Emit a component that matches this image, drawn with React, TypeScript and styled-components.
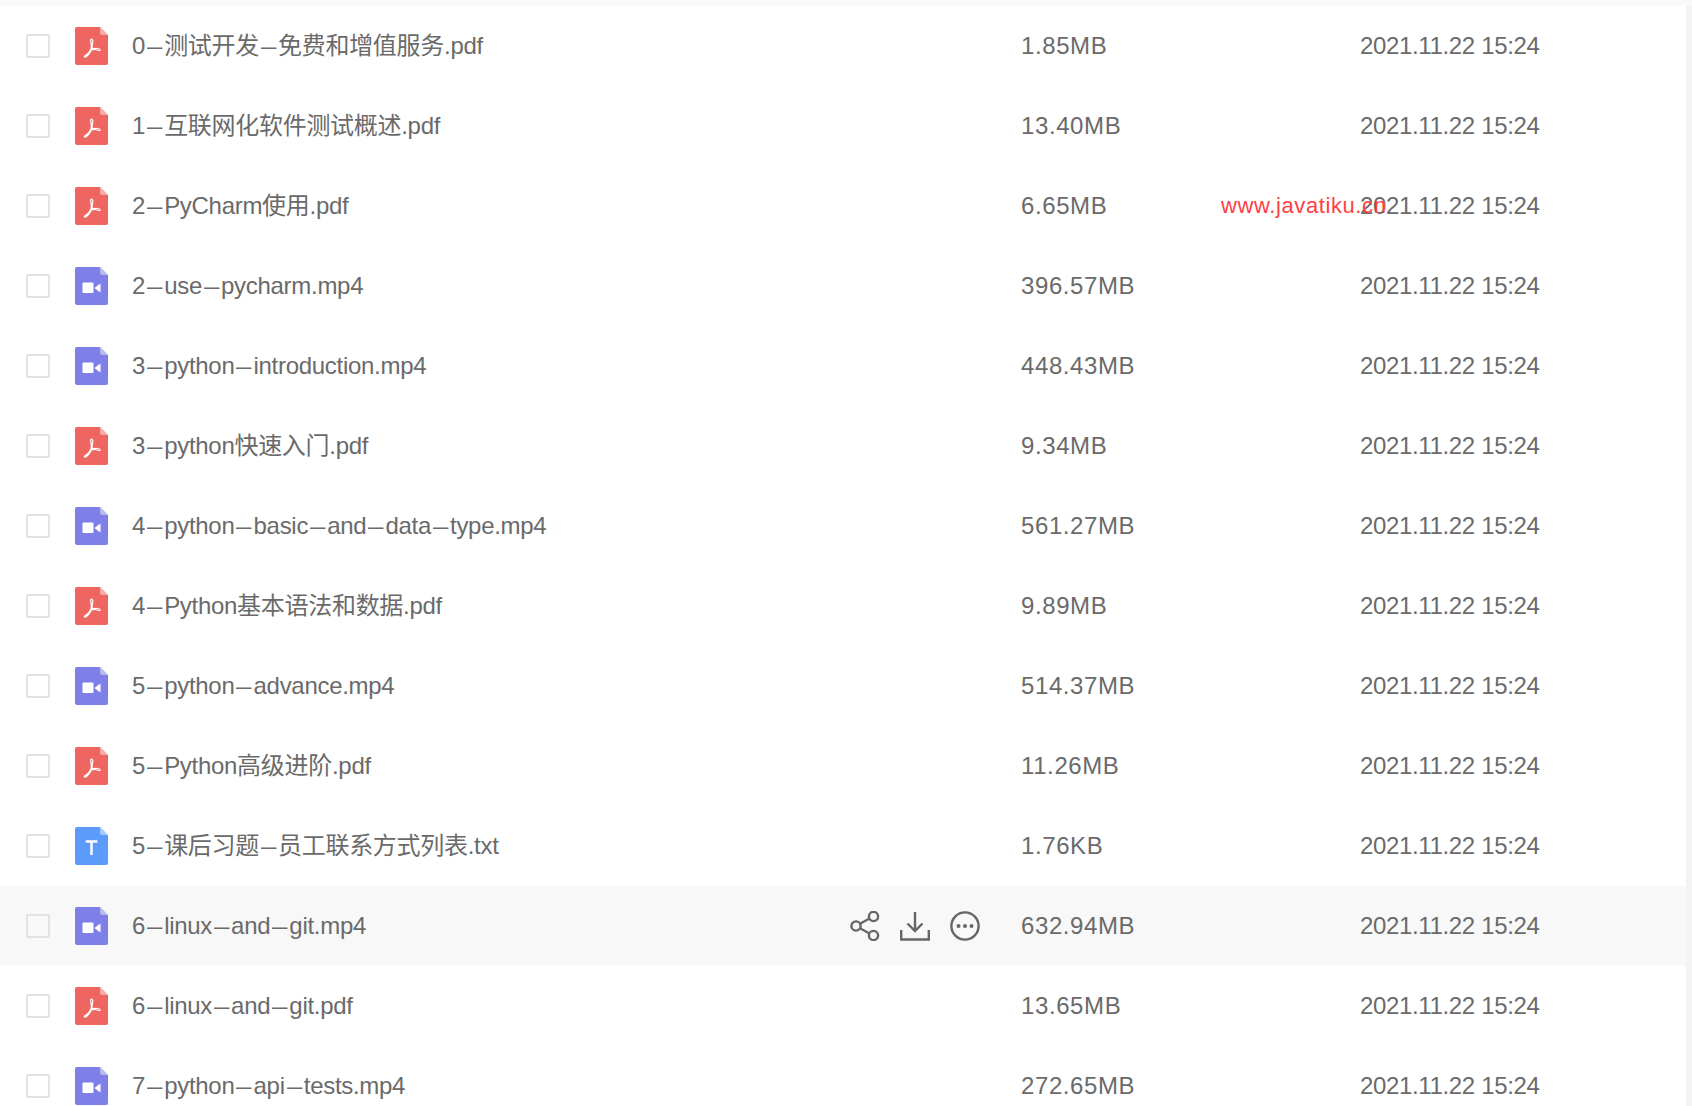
import React from "react";
import styled, { createGlobalStyle } from "styled-components";

const Global = createGlobalStyle`
  html, body { margin: 0; padding: 0; background: #fff; }
  body { font-family: "Liberation Sans", "Noto Sans CJK SC", sans-serif; overflow: hidden; }
`;

const Page = styled.div`
  height: 1106px;
  overflow: hidden;
  padding-top: 6px;
  padding-right: 6px;
  box-sizing: border-box;
  position: relative;
  background: linear-gradient(#f9f9f9, #f9f9f9) top / 100% 6px no-repeat,
    linear-gradient(#f3f3f3, #f3f3f3) right / 6px 100% no-repeat, #fff;
`;

const Row = styled.div<{ $hover?: boolean }>`
  height: 80px;
  display: flex;
  align-items: center;
  padding-left: 26px;
  position: relative;
  background: ${(p) => (p.$hover ? "#f8f8f8" : "transparent")};
`;

const Check = styled.span`
  width: 24px;
  height: 24px;
  box-sizing: border-box;
  border: 2px solid #e2e2e2;
  border-radius: 2px;
  margin-right: 25px;
  flex: none;
`;

const IconBox = styled.svg`
  width: 33px;
  height: 38px;
  flex: none;
  margin-right: 24px;
`;

const Name = styled.div`
  width: 889px;
  flex: none;
  display: flex;
  align-items: center;
  justify-content: space-between;
  font-size: 24px;
  line-height: 32px;
  color: #6a6a6a;
  letter-spacing: -0.29px;
  white-space: nowrap;
`;

const Dash = styled.span`
  display: inline-block;
  padding: 0 3px;
  transform: scaleX(1.15);
`;

const Actions = styled.div`
  display: flex;
  gap: 20px;
  margin-right: 41px;
  color: #666;
`;

const ActionIcon = styled.svg`
  width: 30px;
  height: 30px;
  display: block;
  fill: none;
  stroke: currentColor;
  stroke-width: 2.4;
`;

const Size = styled.div`
  width: 339px;
  flex: none;
  font-size: 24px;
  line-height: 32px;
  letter-spacing: 0.6px;
  color: #6a6a6a;
`;

const DateCell = styled.div`
  font-size: 24px;
  line-height: 32px;
  letter-spacing: -0.35px;
  color: #6a6a6a;
  white-space: nowrap;
`;

const Watermark = styled.span`
  position: absolute;
  left: 1221px;
  top: 24px;
  font-size: 22px;
  line-height: 32px;
  letter-spacing: 0.6px;
  color: #ff4040;
  white-space: nowrap;
`;

type Kind = "pdf" | "video" | "text";
const colours: Record<Kind, string> = { pdf: "#ef6661", video: "#7f7fe8", text: "#5c9bfb" };

const FileIcon = ({ kind }: { kind: Kind }) => (
  <IconBox viewBox="0 0 33 38">
    <path
      d="M2 0H25L33 8V36a2 2 0 0 1-2 2H2a2 2 0 0 1-2-2V2a2 2 0 0 1 2-2Z"
      fill={colours[kind]}
    />
    <path d="M25 0L33 8H27a2 2 0 0 1-2-2Z" fill="#fff" fillOpacity="0.45" />
    {kind === "pdf" && (
      <path
        d="M16.4 12c-.9 0-.9 1.400-.6 3 .5 2.600.9 4.500.3 6.500-.9 2.800-3 5.200-6.200 7.300-.9.700-.3 1.600.7 1.200 2.300-1.300 4.200-4.200 5.600-6.900 2.200-.8 4.500-.9 6.900.1 1 .5 2.100.4 2.100-.5 0-1.100-3.800-1.800-7.800-.8-.6-1.800-.3-4.500.3-6.900.4-1.600-.2-3-1.300-3Z"
        fill="none"
        stroke="#fff"
        strokeWidth="1.2"
        strokeLinejoin="round"
      />
    )}
    {kind === "video" && (
      <g fill="#fff">
        <rect x="7.500" y="15.500" width="11" height="10.500" rx="1" />
        <path d="M20 20.500L25.500 16.500V25.500L20 21.500Z" />
      </g>
    )}
    {kind === "text" && (
      <path d="M10.700 14.500H22.300M16.500 14.500V28" fill="none" stroke="#fff" strokeWidth="2.400" />
    )}
  </IconBox>
);

const Share = () => (
  <ActionIcon viewBox="0 0 30 30">
    <circle cx="6" cy="15" r="4.600" />
    <circle cx="23.500" cy="5.500" r="4.600" />
    <circle cx="23.500" cy="24.500" r="4.600" />
    <path d="M10 12.700L19.500 7.500M10 17.300L19.500 22.500" />
  </ActionIcon>
);

const Download = () => (
  <ActionIcon viewBox="0 0 30 30">
    <path d="M15 1V20M7.500 12.500L15 20L22.500 12.500" />
    <path d="M1.200 19V28.500H28.800V19" />
  </ActionIcon>
);

const More = () => (
  <ActionIcon viewBox="0 0 30 30">
    <circle cx="15" cy="15" r="13.600" />
    <circle cx="8.500" cy="15" r="2" fill="currentColor" stroke="none" />
    <circle cx="15" cy="15" r="2" fill="currentColor" stroke="none" />
    <circle cx="21.500" cy="15" r="2" fill="currentColor" stroke="none" />
  </ActionIcon>
);

const files: { name: string; kind: Kind; size: string }[] = [
  { name: "0–测试开发–免费和增值服务.pdf", kind: "pdf", size: "1.85MB" },
  { name: "1–互联网化软件测试概述.pdf", kind: "pdf", size: "13.40MB" },
  { name: "2–PyCharm使用.pdf", kind: "pdf", size: "6.65MB" },
  { name: "2–use–pycharm.mp4", kind: "video", size: "396.57MB" },
  { name: "3–python–introduction.mp4", kind: "video", size: "448.43MB" },
  { name: "3–python快速入门.pdf", kind: "pdf", size: "9.34MB" },
  { name: "4–python–basic–and–data–type.mp4", kind: "video", size: "561.27MB" },
  { name: "4–Python基本语法和数据.pdf", kind: "pdf", size: "9.89MB" },
  { name: "5–python–advance.mp4", kind: "video", size: "514.37MB" },
  { name: "5–Python高级进阶.pdf", kind: "pdf", size: "11.26MB" },
  { name: "5–课后习题–员工联系方式列表.txt", kind: "text", size: "1.76KB" },
  { name: "6–linux–and–git.mp4", kind: "video", size: "632.94MB" },
  { name: "6–linux–and–git.pdf", kind: "pdf", size: "13.65MB" },
  { name: "7–python–api–tests.mp4", kind: "video", size: "272.65MB" },
];

const FileName = ({ text }: { text: string }) => (
  <span>
    {text.split("–").map((part, i) => (
      <React.Fragment key={i}>
        {i > 0 && <Dash>–</Dash>}
        {part}
      </React.Fragment>
    ))}
  </span>
);

export default function App() {
  return (
    <Page>
      <Global />
      {files.map((f, i) => (
        <Row key={f.name} $hover={i === 11}>
          <Check />
          <FileIcon kind={f.kind} />
          <Name>
            <FileName text={f.name} />
            {i === 11 && (
              <Actions>
                <Share />
                <Download />
                <More />
              </Actions>
            )}
          </Name>
          <Size>{f.size}</Size>
          <DateCell>2021.11.22 15:24</DateCell>
          {i === 2 && <Watermark>www.javatiku.cn</Watermark>}
        </Row>
      ))}
    </Page>
  );
}
